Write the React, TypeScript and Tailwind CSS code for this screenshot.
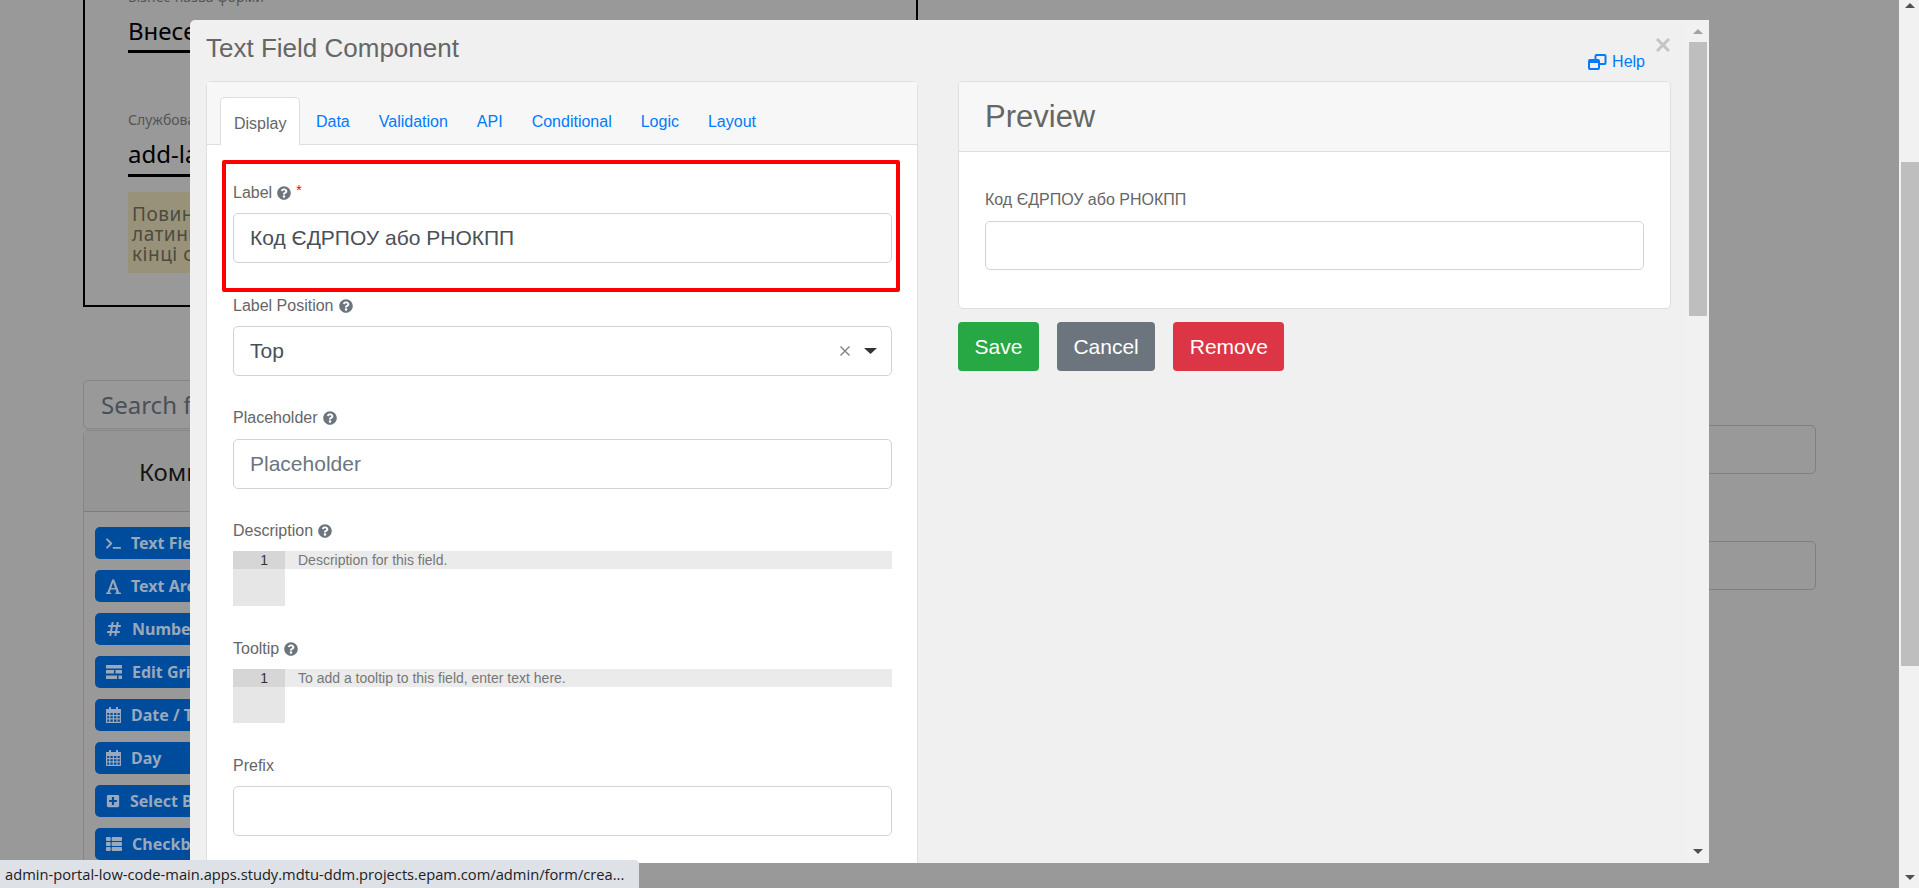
import type { ReactNode } from "react";
import { FaHashtag, FaPlusSquare, FaQuestionCircle, FaTerminal, FaThList } from "react-icons/fa";

function SerifA() {
  return (
    <svg width="15" height="15" viewBox="0 0 15 15" fill="currentColor">
      <path d="M0 15 V13.8 L1.4 13.5 L6.2 0.5 H8.2 L13.2 13.5 L15 13.8 V15 H9.2 V13.8 L10.6 13.5 L9.6 10.6 H4.6 L3.6 13.5 L5.2 13.8 V15 Z M5.2 8.9 H9 L7.1 3.6 Z" />
    </svg>
  );
}

function GridBars() {
  return (
    <svg width="16" height="14" viewBox="0 0 16 14" fill="currentColor">
      <path d="M0 0 H16 V3.6 H0 Z M0 5 H8 V8.6 H0 Z M9.5 5 H16 V8.6 H9.5 Z M0 10.4 H11 V14 H0 Z M12.5 10.4 H16 V14 H12.5 Z" />
    </svg>
  );
}

function CalendarGrid() {
  return (
    <svg width="15" height="16" viewBox="0 0 15 16" fill="currentColor">
      <path
        fillRule="evenodd"
        d="M3 0 H5 V2 H10 V0 H12 V2 H15 V16 H0 V2 H3 Z M1.2 6 V8 H3.2 V6 Z M4.4 6 V8 H6.8 V6 Z M8 6 V8 H10.4 V6 Z M11.6 6 V8 H13.8 V6 Z M1.2 9.2 V11.2 H3.2 V9.2 Z M4.4 9.2 V11.2 H6.8 V9.2 Z M8 9.2 V11.2 H10.4 V9.2 Z M11.6 9.2 V11.2 H13.8 V9.2 Z M1.2 12.4 V14.8 H3.2 V12.4 Z M4.4 12.4 V14.8 H6.8 V12.4 Z M8 12.4 V14.8 H10.4 V12.4 Z M11.6 12.4 V14.8 H13.8 V12.4 Z"
      />
    </svg>
  );
}

const components = [
  { name: "Text Field", icon: <FaTerminal size={15} /> },
  { name: "Text Area", icon: <SerifA /> },
  { name: "Number", icon: <FaHashtag size={16} /> },
  { name: "Edit Grid", icon: <GridBars /> },
  { name: "Date / Time", icon: <CalendarGrid /> },
  { name: "Day", icon: <CalendarGrid /> },
  { name: "Select Boxes", icon: <FaPlusSquare size={14} /> },
  { name: "Checkbox", icon: <FaThList size={16} /> },
];

const tabs = ["Data", "Validation", "API", "Conditional", "Logic", "Layout"];

function Help() {
  return <FaQuestionCircle size={14} className="ml-[5px] text-[#6c757d]" />;
}

function FieldLabel({ children }: { children: ReactNode }) {
  return <div className="flex h-[24px] items-center pt-[2px] text-[16px] text-[#666]">{children}</div>;
}

function TextInput({ value, placeholder, gap = "mt-[9px]" }: { value?: string; placeholder?: string; gap?: string }) {
  return (
    <input
      readOnly
      value={value ?? ""}
      placeholder={placeholder}
      className={`${gap} block h-[50px] w-full rounded-[5px] border border-[#ced4da] bg-white px-[16px] text-[21px] text-[#495057] placeholder:text-[#6c757d]`}
    />
  );
}

function CodeBox({ text, height }: { text: string; height: string }) {
  return (
    <div className={`mt-[9px] flex ${height} w-full`}>
      <div className="w-[52px] bg-[#e6e6e6]">
        <div className="h-[18px] bg-[#d6d6d6] pr-[17px] text-right text-[14px] leading-[18px] text-[#333]">1</div>
      </div>
      <div className="flex-1">
        <div className="h-[18px] bg-[#ebebeb] pl-[13px] text-[14px] leading-[18px] text-[#777]">{text}</div>
      </div>
    </div>
  );
}

function Arrow({ dir, color }: { dir: "up" | "down"; color: string }) {
  return (
    <svg width="10" height="5" viewBox="0 0 10 5" className="block">
      <path d={dir === "up" ? "M5 0 L10 5 L0 5 Z" : "M0 0 L10 0 L5 5 Z"} fill={color} />
    </svg>
  );
}

function BackgroundPage() {
  return (
    <div className="flex h-full flex-1 justify-between overflow-hidden px-[83px] font-['Noto_Sans',sans-serif]">
      <div className="w-[835px]">
        <div className="-mt-[13px] h-[320px] border-x-2 border-b-2 border-black pl-[43px]">
          <div className="h-[20px] text-[14px] leading-[20px] text-[#555]">Бізнес-назва форми</div>
          <div className="mt-[2px] h-[44px] border-b-[3px] border-black text-[24px] leading-[44px] text-black">
            Внесення даних
          </div>
          <div className="mt-[57px] h-[20px] text-[14px] leading-[20px] text-[#555]">Службова назва форми</div>
          <div className="mt-[2px] h-[45px] border-b-[3px] border-black text-[24px] leading-[44px] text-black">
            add-lab-form
          </div>
          <div className="mt-[15px] h-[81px] bg-[#99927a] px-[4px] py-[12px] text-[19px] leading-[20px] tracking-[0.5px] text-[#4c4b3e]">
            <div>Повинно містити</div>
            <div>латиницю</div>
            <div>кінці символів</div>
          </div>
        </div>
        <div className="mt-[73px] h-[49px] w-[240px] rounded-[5px] border border-[#858585] pl-[17px] text-[24px] leading-[47px] text-[#4a5056]">
          Search field(s)
        </div>
        <div className="mt-[1px] w-[240px] rounded-t-[5px] border border-[#858585]">
          <div className="h-[81px] border-b border-[#7d7d7d] bg-[#959595] pl-[55px] text-[24px] leading-[81px] text-[#141414]">
            Компоненти
          </div>
          <div className="flex flex-col gap-[11px] px-[11px] pt-[15px]">
            {components.map((c) => (
              <div
                key={c.name}
                className="flex h-[32px] items-center gap-[10px] rounded-[5px] bg-[#004c9c] pl-[11px] text-[16px] font-bold text-[#99a9bb]"
              >
                {c.icon}
                {c.name}
              </div>
            ))}
          </div>
        </div>
      </div>
      <div className="w-[300px] pt-[425px]">
        <div className="h-[49px] rounded-[5px] border border-[#7f7f7f]" />
        <div className="mt-[67px] h-[49px] rounded-[5px] border border-[#7f7f7f]" />
      </div>
    </div>
  );
}

function Modal() {
  return (
    <div className="absolute left-[190px] top-[20px] flex h-[843px] w-[1519px] overflow-hidden rounded-tl-[5px] bg-[#f0f0f0] font-['Liberation_Sans',sans-serif]">
      <div className="min-w-0 flex-1 px-[16px]">
        <div className="flex h-[61px]">
          <div className="pt-[12px] text-[26px] leading-[32px] text-[#666]">Text Field Component</div>
          <a className="ml-auto mt-[30px] flex h-[24px] items-center gap-[5px] text-[16px] text-[#007bff]">
            <svg width="19" height="16" viewBox="0 0 19 16" fill="none" stroke="#007bff" strokeWidth="2">
              <rect x="7.5" y="1" width="10" height="9" rx="1" />
              <rect x="1" y="6" width="10" height="9" rx="1" fill="#f0f0f0" />
              <path d="M1 7.5 H11" strokeWidth="3" />
            </svg>
            Help
          </a>
          <svg width="14" height="14" viewBox="0 0 14 14" className="ml-[11px] mr-[1px] mt-[18px]" stroke="#c4c4c4" strokeWidth="3">
            <path d="M1 1 L13 13 M13 1 L1 13" />
          </svg>
        </div>
        <div className="flex gap-[40px]">
          <div className="w-[712px] flex-none rounded-t-[5px] border border-[#dfdfdf] bg-white">
            <div className="flex h-[63px] items-end border-b border-[#dfdfdf] bg-[#f7f7f7] pl-[13px] text-[16px] text-[#007bff]">
              <div className="-mb-px mr-[1px] h-[48px] rounded-t-[5px] border border-b-0 border-[#dfdfdf] bg-white px-[13px] pt-[14px] text-[#666]">
                Display
              </div>
              {tabs.map((t) => (
                <div key={t} className="h-[47px] px-[14.5px] pt-[13px]">
                  {t}
                </div>
              ))}
            </div>
            <div className="relative pl-[26px] pr-[25px] pt-[35px]">
              <div className="pointer-events-none absolute left-[15px] right-[17px] top-[15px] h-[132px] rounded-[2px] border-4 border-[#ff0000]" />
              <FieldLabel>
                Label
                <Help />
                <span className="ml-[5px] -mt-[5px] text-[14px] text-[#ff0000]">*</span>
              </FieldLabel>
              <TextInput value="Код ЄДРПОУ або РНОКПП" />
              <div className="mt-[30px]">
                <FieldLabel>
                  Label Position
                  <Help />
                </FieldLabel>
              </div>
              <div className="mt-[9px] flex h-[50px] w-full items-center rounded-[5px] border border-[#ced4da] bg-white pl-[16px] pr-[14px] text-[21px] text-[#495057]">
                Top
                <svg width="10" height="10" viewBox="0 0 10 10" className="ml-auto" stroke="#808080" strokeWidth="1.4">
                  <path d="M0.5 0.5 L9.5 9.5 M9.5 0.5 L0.5 9.5" />
                </svg>
                <svg width="13" height="6" viewBox="0 0 13 6" className="ml-[14px]">
                  <path d="M0 0 H13 L6.5 6 Z" fill="#333" />
                </svg>
              </div>
              <div className="mt-[29px]">
                <FieldLabel>
                  Placeholder
                  <Help />
                </FieldLabel>
              </div>
              <TextInput placeholder="Placeholder" gap="mt-[10px]" />
              <div className="mt-[29px]">
                <FieldLabel>
                  Description
                  <Help />
                </FieldLabel>
              </div>
              <CodeBox text="Description for this field." height="h-[55px]" />
              <div className="mt-[30px]">
                <FieldLabel>
                  Tooltip
                  <Help />
                </FieldLabel>
              </div>
              <CodeBox text="To add a tooltip to this field, enter text here." height="h-[54px]" />
              <div className="mt-[30px]">
                <FieldLabel>Prefix</FieldLabel>
              </div>
              <TextInput />
              <div className="h-[60px]" />
            </div>
          </div>
          <div className="min-w-0 flex-1">
            <div className="h-[228px] rounded-[5px] border border-[#dfdfdf] bg-white">
              <div className="h-[70px] rounded-t-[5px] border-b border-[#dfdfdf] bg-[#f7f7f7] pl-[26px] text-[31px] leading-[70px] text-[#666]">
                Preview
              </div>
              <div className="px-[26px] pt-[36px]">
                <div className="h-[24px] text-[16px] leading-[24px] text-[#666]">Код ЄДРПОУ або РНОКПП</div>
                <div className="mt-[9px] h-[49px] rounded-[5px] border border-[#ced4da]" />
              </div>
            </div>
            <div className="mt-[13px] flex gap-[18px] text-[21px] text-white">
              <div className="flex h-[49px] items-center rounded-[4px] bg-[#28a745] px-[16.5px]">Save</div>
              <div className="flex h-[49px] items-center rounded-[4px] bg-[#6c757d] px-[16.5px]">Cancel</div>
              <div className="flex h-[49px] items-center rounded-[4px] bg-[#dc3545] px-[16.5px]">Remove</div>
            </div>
          </div>
        </div>
      </div>
      <div className="flex h-full w-[22px] flex-col items-center bg-[#f1f1f1]">
        <div className="mt-[9px]">
          <Arrow dir="up" color="#a3a3a3" />
        </div>
        <div className="mt-[8px] h-[274px] w-[18px] bg-[#bebebe]" />
        <div className="mb-[9px] mt-auto">
          <Arrow dir="down" color="#505050" />
        </div>
      </div>
    </div>
  );
}

export default function App() {
  return (
    <div className="relative flex h-[888px] w-[1919px] overflow-hidden bg-[#999999]">
      <BackgroundPage />
      <div className="flex h-full w-[20px] flex-col items-center bg-[#f1f1f1] pl-[2px]">
        <div className="mt-[3px]">
          <Arrow dir="up" color="#505050" />
        </div>
        <div className="mt-[154px] h-[504px] w-[18px] bg-[#bebebe]" />
        <div className="mb-[8px] mt-auto">
          <Arrow dir="down" color="#505050" />
        </div>
      </div>
      <Modal />
      <div className="absolute bottom-0 left-0 h-[28px] w-[639px] overflow-hidden whitespace-nowrap rounded-tr-[4px] bg-[#dee1e6] pl-[5px] font-['Open_Sans',sans-serif] text-[14.7px] leading-[28px] text-[#202124]">
        admin-portal-low-code-main.apps.study.mdtu-ddm.projects.epam.com/admin/form/crea...
      </div>
    </div>
  );
}
